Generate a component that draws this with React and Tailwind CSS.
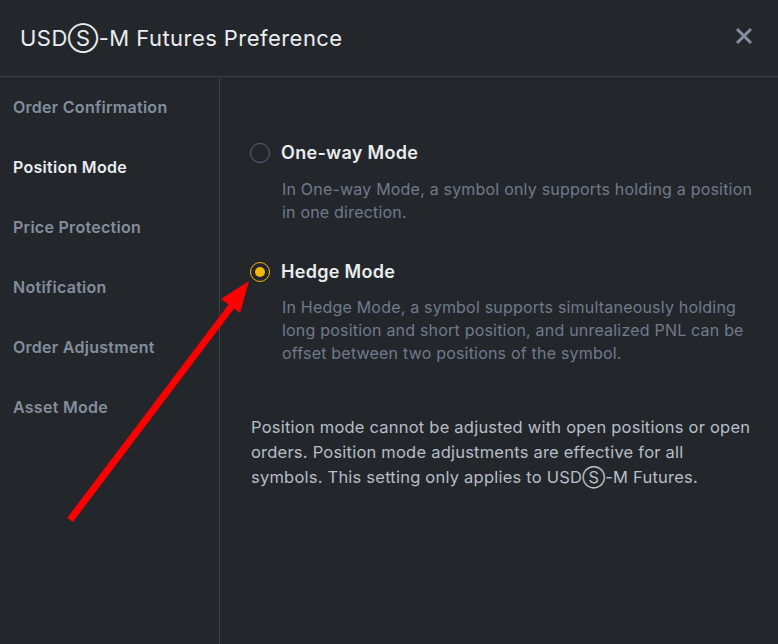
import React from "react";

const font = { fontFamily: "Inter, 'Noto Sans', 'DejaVu Sans', sans-serif" };

function Radio({ checked }) {
  return checked ? (
    <span className="flex h-[20px] w-[20px] shrink-0 items-center justify-center rounded-full border-[1.5px] border-[#f0b90b]">
      <span className="h-[10px] w-[10px] rounded-full bg-[#f0b90b]" />
    </span>
  ) : (
    <span className="h-[20px] w-[20px] shrink-0 rounded-full border-[1.5px] border-[#5e6673]" />
  );
}

function Option({ checked, title, desc, gap }) {
  return (
    <div className="flex flex-col">
      <div className="flex h-[24px] items-center gap-[11px]">
        <Radio checked={checked} />
        <span className="text-[18px] font-semibold leading-[24px] tracking-[0.3px] text-[#eaecef]">{title}</span>
      </div>
      <p className={gap + " pl-[32px] text-[16px] leading-[23px] tracking-[0.2px] text-[#707a8a]"}>{desc}</p>
    </div>
  );
}

export default function App() {
  const items = [
    "Order Confirmation",
    "Position Mode",
    "Price Protection",
    "Notification",
    "Order Adjustment",
    "Asset Mode",
  ];
  return (
    <div style={font} className="relative flex h-[644px] w-[778px] flex-col overflow-hidden bg-[#23272c]">
      <div className="flex h-[77px] shrink-0 items-center justify-between border-b border-[#3c4148] pl-[20px] pr-[24px]">
        <h1 className="text-[22px] font-normal tracking-[0.45px] text-[#eaecef]">USDⓈ-M Futures Preference</h1>
        <svg width="20" height="20" viewBox="0 0 20 20" className="mt-[-4px]">
          <path d="M3 3 L17 17 M17 3 L3 17" stroke="#848e9c" strokeWidth="3" strokeLinecap="butt" />
        </svg>
      </div>
      <div className="flex flex-1">
        <div className="flex w-[220px] shrink-0 flex-col border-r border-[#3c4148]">
          {items.map((it) => (
            <div
              key={it}
              className={
                "flex h-[60px] items-center pl-[13px] text-[16px] font-semibold tracking-[0.28px] " +
                (it === "Position Mode" ? "text-[#eaecef]" : "text-[#848e9c]")
              }
            >
              {it}
            </div>
          ))}
        </div>
        <div className="flex flex-1 flex-col pl-[30px] pr-[20px] pt-[64px]">
          <Option
            gap="mt-[13px]"
            title="One-way Mode"
            desc="In One-way Mode, a symbol only supports holding a position in one direction."
          />
          <div className="mt-[36px]">
            <Option
              checked
              gap="mt-[12px]"
              title="Hedge Mode"
              desc="In Hedge Mode, a symbol supports simultaneously holding long position and short position, and unrealized PNL can be offset between two positions of the symbol."
            />
          </div>
          <p className="mt-[50px] pl-[1px] text-[16.5px] leading-[25px] tracking-[0.22px] text-[#b7bdc6]">
            Position mode cannot be adjusted with open positions or open orders. Position mode adjustments are effective for all symbols. This setting only applies to USDⓈ-M Futures.
          </p>
        </div>
      </div>
      <svg className="pointer-events-none absolute left-0 top-0" width="778" height="644" viewBox="0 0 778 644">
        <line x1="70" y1="520" x2="234" y2="303" stroke="#ff0000" strokeWidth="7" />
        <polygon points="249,281 221,299 240,313" fill="#ff0000" />
      </svg>
    </div>
  );
}
